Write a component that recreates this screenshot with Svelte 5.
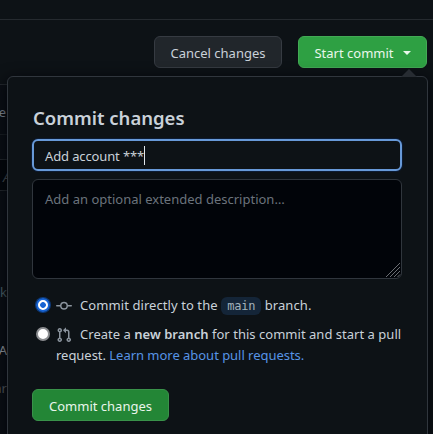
<script>
  let summary = $state('Add account ***');
  let target = $state('direct');
</script>

<div class="page">
  <div class="topbar"></div>
  <div class="actions">
    <button class="btn cancel">Cancel changes</button>
    <button class="btn start"><span>Start commit</span><i class="caret"></i></button>
  </div>

  <aside class="behind">
    <div class="name">e</div>
    <div class="filter"><div class="field"><em>A</em></div></div>
    <div class="peek k">k</div>
    <div class="peek a">A</div>
    <div class="peek ar">ar</div>
  </aside>

  <section class="popover">
    <svg class="arrow" width="16" height="8" viewBox="0 0 16 8"><path d="M0 8 8 0l8 8z" fill="#272c32" /></svg>
    <h3>Commit changes</h3>
    <div class="summary"><span>{summary}</span><i class="cursor"></i></div>
    <div class="description">
      <span>Add an optional extended description…</span>
      <svg class="grip" width="16" height="16" viewBox="0 0 16 16">
        <path d="M1 15 15 1M5 15 15 5M9 15l6-6M12.500 15l2.500-2.500" stroke="#777b80" stroke-width="0.900" />
      </svg>
    </div>
    <div class="choice first">
      <button class="radio" class:on={target === 'direct'} aria-label="Commit directly" onclick={() => (target = 'direct')}></button>
      <svg class="icon" width="16" height="16" viewBox="0 0 16 16" fill="#8b949e"><path fill-rule="evenodd" d="M10.500 7.750a2.500 2.500 0 1 1-5 0 2.500 2.500 0 0 1 5 0zm1.430.750a4.002 4.002 0 0 1-7.860 0H.750a.750.750 0 0 1 0-1.500h3.320a4.001 4.001 0 0 1 7.860 0h3.320a.750.750 0 0 1 0 1.500h-3.320z" /></svg>
      <p class="l1">Commit directly to the <code>main</code> branch.</p>
    </div>
    <div class="choice second">
      <button class="radio" class:on={target === 'branch'} aria-label="Create a new branch" onclick={() => (target = 'branch')}></button>
      <div class="lines">
        <div class="row">
          <svg class="icon" width="16" height="16" viewBox="0 0 16 16" fill="#8b949e"><path fill-rule="evenodd" d="M7.177 3.073 9.573.677A.25.25 0 0 1 10 .854v4.792a.25.25 0 0 1-.427.177L7.177 3.427a.25.25 0 0 1 0-.354zM3.750 2.500a.750.750 0 1 0 0 1.500.750.750 0 0 0 0-1.500zm-2.250.750a2.250 2.250 0 1 1 3 2.122v5.256a2.251 2.251 0 1 1-1.500 0V5.372A2.250 2.250 0 0 1 1.500 3.250zM11 2.500h-1V4h1a1 1 0 0 1 1 1v5.628a2.251 2.251 0 1 0 1.500 0V5A2.500 2.500 0 0 0 11 2.500zm1 10.250a.750.750 0 1 1 1.500 0 .750.750 0 0 1-1.500 0zM3.750 12a.750.750 0 1 0 0 1.500.750.750 0 0 0 0-1.500z" /></svg>
          <p class="l2">Create a <b>new branch</b> for this commit and start a pull</p>
        </div>
        <p class="l3">request. <a href="#learn">Learn more about pull requests.</a></p>
      </div>
    </div>
    <button class="btn commit">Commit changes</button>
  </section>
</div>

<style>
  .page { position: relative; width: 433px; height: 434px; overflow: hidden; background: #0d1216; color: #c9d1d9; font: 13px/21px "Noto Sans", sans-serif; box-sizing: border-box; }
  .page * { box-sizing: border-box; }
  .topbar { height: 20px; border-bottom: 1px solid #252a2f; }
  .actions { display: flex; justify-content: flex-end; gap: 16px; padding: 16px 6px 0 0; height: 64px; }
  .btn { display: flex; align-items: center; justify-content: center; height: 32px; padding: 2px 0 0; border: 1px solid #363b42; border-radius: 6px; background: #21262b; color: #c9d1d9; font: 13px/20px "Noto Sans", sans-serif; white-space: nowrap; }
  .cancel { width: 128px; }
  .start { width: 129px; gap: 9px; background: #2ea043; border-color: #43aa55; color: #e9f7eb; }
  .start .caret { width: 0; height: 0; border: 4px solid transparent; border-top-color: #e9f7eb; border-bottom: 0; }
  .commit { width: 137px; margin-top: 23px; background: #238636; border-color: #39924a; color: #e9f5eb; }

  .behind { width: 7px; height: 350px; overflow: hidden; border-top: 1px solid #24292e; background: #0b0f15; color: #8b949e; display: flex; flex-direction: column; align-items: flex-end; }
  .name { height: 50px; padding-top: 17px; padding-right: 1px; border-bottom: 1px solid #1b2025; }
  .filter { width: 100%; height: 56px; padding-top: 24px; }
  .field { height: 32px; border: solid #252a2f; border-width: 1px 0; background: #04070c; line-height: 34px; overflow: hidden; padding-left: 3px; color: #51575e; }
  .peek { white-space: nowrap; line-height: 20px; height: 20px; }
  .k { margin-top: 91px; color: #4f666d; }
  .a { margin-top: 38px; color: #a0a6ab; }
  .ar { margin-top: 18px; color: #596067; }

  .popover { position: absolute; left: 7px; top: 76px; width: 421px; height: 380px; padding: 26px 25px 0 24px; border: 1px solid #30363d; border-radius: 6px; background: #0d1216; box-shadow: 0 4px 16px #010409; }
  .arrow { position: absolute; right: 10px; top: -8px; }
  h3 { margin: 0; height: 36px; padding-left: 1px; font-size: 18.500px; line-height: 30px; font-weight: 600; }
  .summary { display: flex; align-items: center; height: 32px; padding: 0 11px; border: 2px solid #6799d8; border-radius: 6px; background: #0d1216; box-shadow: 0 0 0 1px #0c2d6b55; }
  .summary span { padding-top: 2px; letter-spacing: -0.130px; }
  .cursor { width: 1px; height: 19px; background: #e0e5eb; }
  .description { display: flex; justify-content: space-between; height: 100px; margin-top: 8px; padding: 9px 0 0 12px; border: 1px solid #30363d; border-radius: 6px; background: #010409; color: #6b737c; }
  .grip { align-self: flex-end; flex: none; }
  .choice { display: flex; align-items: flex-start; padding-left: 4px; }
  .first { margin-top: 16px; height: 29px; }
  .second { height: 42px; }
  .radio { flex: none; width: 14px; height: 14px; margin: 3px 6px 0 0; padding: 0; border: 2px solid #8b8d90; border-radius: 50%; background: #fff; }
  .radio.on { border-color: #1763d3; background: radial-gradient(circle, #1763d3 0 2.500px, #fff 3.200px); box-shadow: 0 0 0 1px #0c3978; }
  .icon { flex: none; margin: 3px 8px 0 0; }
  .row { display: flex; }
  p { margin: 0; white-space: nowrap; }
  .l1 { letter-spacing: 0.080px; }
  .l2 { letter-spacing: 0.025px; }
  .l3 { letter-spacing: -0.030px; }
  code { display: inline-block; height: 18px; padding: 0 6px; border-radius: 6px; background: #142538; color: #a2b1bc; font: 12px/18px "DejaVu Sans Mono", monospace; letter-spacing: -0.200px; }
  b { font-weight: 600; }
  a { color: #5794e5; text-decoration: none; }
</style>
